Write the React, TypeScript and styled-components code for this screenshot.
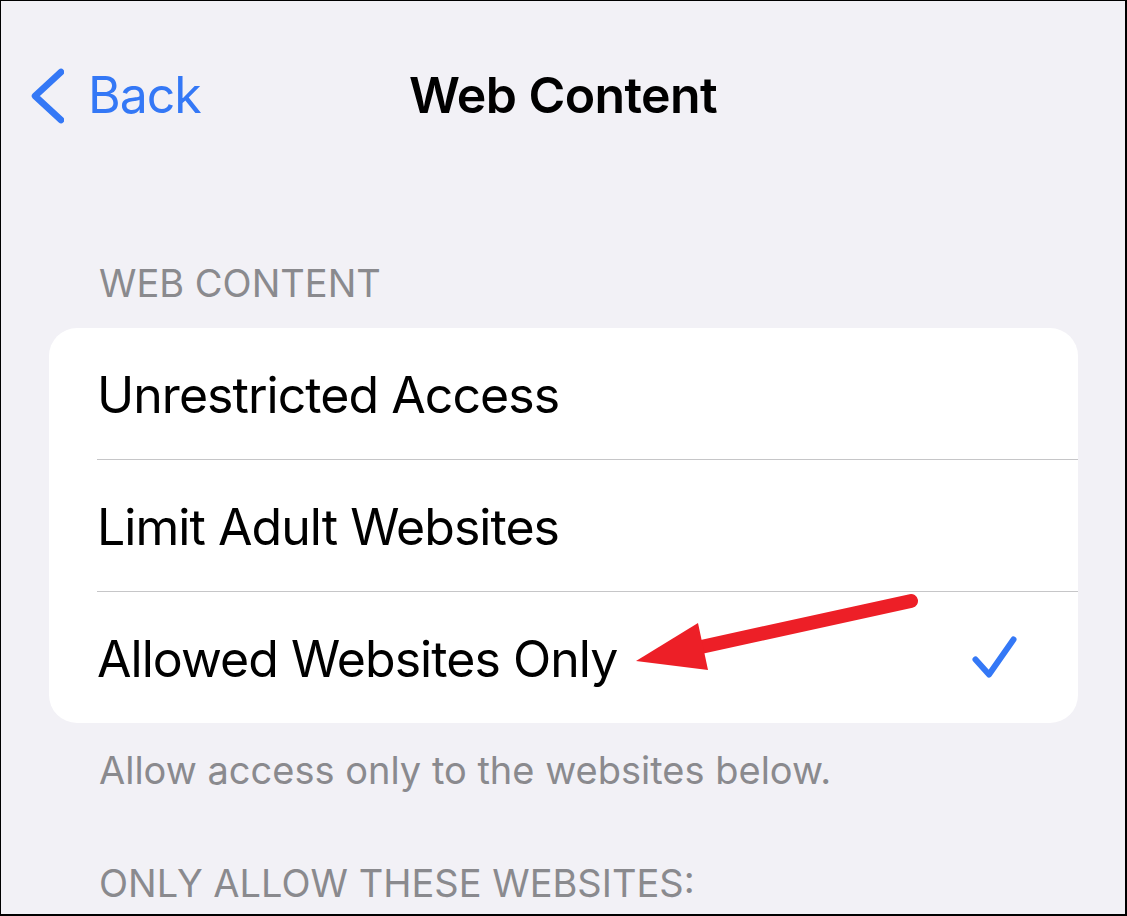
import React from "react";
import styled, { createGlobalStyle } from "styled-components";

const GlobalStyle = createGlobalStyle`
  html, body {
    margin: 0;
    padding: 0;
    background: #f2f2f7;
  }
  * { box-sizing: border-box; }
`;

const Frame = styled.div`
  position: relative;
  width: 1127px;
  height: 916px;
  border-style: solid;
  border-color: #000;
  border-width: 1px 2px 2px 1px;
  background: #f2f1f6;
  overflow: hidden;
  font-family: Inter, "Noto Sans", sans-serif;
`;

const NavBar = styled.div`
  display: grid;
  grid-template-columns: 1fr auto 1fr;
  align-items: center;
  height: 60px;
  margin-top: 64px;
`;

const BackButton = styled.div`
  display: flex;
  align-items: center;
  gap: 24px;
  padding-left: 27px;
  color: #3478f6;
  font-size: 50px;
  line-height: 60px;
  letter-spacing: -1px;
`;

const Title = styled.div`
  font-size: 50px;
  line-height: 60px;
  font-weight: 600;
  color: #000;
  letter-spacing: -0.6px;
`;

const SectionLabel = styled.div<{ $top: number }>`
  margin: ${(p) => p.$top}px 0 0 98px;
  font-size: 38px;
  line-height: 46px;
  color: #8a8a8e;
`;

const Card = styled.div`
  position: relative;
  margin: 22px 47px 0 48px;
  padding-left: 48px;
  background: #fff;
  border-radius: 28px;
`;

const Row = styled.div`
  display: flex;
  align-items: center;
  justify-content: space-between;
  height: 132px;
  padding-right: 61px;
  border-top: 1px solid #c6c6c8;
  &:first-child {
    border-top: none;
    height: 131px;
  }
`;

const RowText = styled.span`
  font-size: 50px;
  line-height: 60px;
  color: #000;
  letter-spacing: -0.95px;
  padding-top: 3px;
`;

const Footer = styled.div`
  margin: 24px 0 0 98px;
  font-size: 38px;
  line-height: 46px;
  color: #8a8a8e;
`;

const ArrowOverlay = styled.svg`
  position: absolute;
  left: 600px;
  top: 580px;
  pointer-events: none;
`;

const Chevron = () => (
  <svg width="36" height="60" viewBox="26 64 36 60">
    <path
      d="M59 71 L33 95 L59 119"
      fill="none"
      stroke="#3478f6"
      strokeWidth="6.5"
      strokeLinecap="round"
      strokeLinejoin="round"
    />
  </svg>
);

const Check = () => (
  <svg width="46" height="46" viewBox="971 636 46 46">
    <path
      d="M975.5 660.5 L989 675.5 L1013.5 640.5"
      fill="none"
      stroke="#3478f6"
      strokeWidth="6"
      strokeLinecap="round"
      strokeLinejoin="round"
    />
  </svg>
);

const rows = ["Unrestricted Access", "Limit Adult Websites", "Allowed Websites Only"];

export default function App() {
  return (
    <>
      <GlobalStyle />
      <Frame>
        <NavBar>
          <BackButton>
            <Chevron />
            <span>Back</span>
          </BackButton>
          <Title>Web Content</Title>
          <div />
        </NavBar>
        <SectionLabel $top={135}>WEB CONTENT</SectionLabel>
        <Card>
          {rows.map((r, i) => (
            <Row key={r}>
              <RowText>{r}</RowText>
              {i === 2 && <Check />}
            </Row>
          ))}
        </Card>
        <Footer>Allow access only to the websites below.</Footer>
        <SectionLabel $top={67}>ONLY ALLOW THESE WEBSITES:</SectionLabel>
        <ArrowOverlay width="330" height="110" viewBox="0 0 330 110">
          <path d="M310 20 L100 66" stroke="#ed1f27" strokeWidth="14" strokeLinecap="round" fill="none" />
          <polygon points="35,80 97,42 107,89" fill="#ed1f27" />
        </ArrowOverlay>
      </Frame>
    </>
  );
}
